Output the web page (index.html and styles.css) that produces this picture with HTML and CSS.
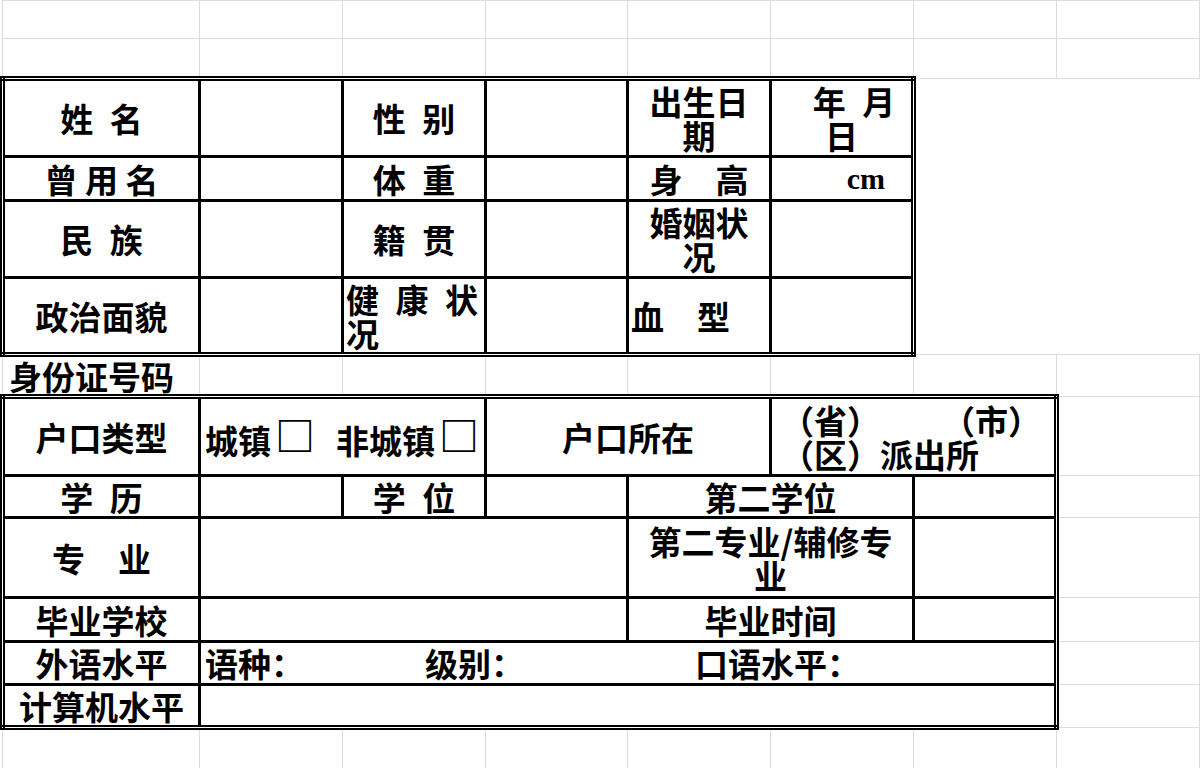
FILE: index.html
```html
<!DOCTYPE html>
<html lang="zh-CN">
<head>
<meta charset="utf-8">
<title>个人信息登记表</title>
<link rel="stylesheet" href="styles.css">
</head>
<body>
<table class="sheet">
  <colgroup>
    <col class="col-a"><col class="col-n"><col class="col-n"><col class="col-d"><col class="col-n"><col class="col-n"><col class="col-n"><col class="col-n">
  </colgroup>
  <tbody>
    <tr class="h38 top-row">
      <td class="g"></td><td class="g"></td><td class="g"></td><td class="g"></td><td class="g"></td><td class="g"></td><td class="g"></td><td class="g"></td>
    </tr>
    <tr class="h40">
      <td class="g"></td><td class="g"></td><td class="g"></td><td class="g"></td><td class="g"></td><td class="g"></td><td class="g"></td><td class="g"></td>
    </tr>

    <tr class="h78">
      <td class="f et el">姓 名</td>
      <td class="f et"></td>
      <td class="f et">性 别</td>
      <td class="f et"></td>
      <td class="f et">出生日<br>期</td>
      <td class="f et er"><span class="ym">年 月</span><br>日</td>
      <td class="x"></td><td class="x"></td>
    </tr>
    <tr class="h44">
      <td class="f el tight">曾 用 名</td>
      <td class="f"></td>
      <td class="f">体 重</td>
      <td class="f"></td>
      <td class="f">身　高</td>
      <td class="f er cm">cm</td>
      <td class="x"></td><td class="x"></td>
    </tr>
    <tr class="h77">
      <td class="f el">民 族</td>
      <td class="f"></td>
      <td class="f">籍 贯</td>
      <td class="f"></td>
      <td class="f">婚姻状<br>况</td>
      <td class="f er"></td>
      <td class="x"></td><td class="x"></td>
    </tr>
    <tr class="h77">
      <td class="f el eb">政治面貌</td>
      <td class="f eb"></td>
      <td class="f eb left">健 康 状<br>况</td>
      <td class="f eb"></td>
      <td class="f eb left">血　型</td>
      <td class="f eb er"></td>
      <td class="x"></td><td class="x"></td>
    </tr>

    <tr class="h42">
      <td class="g id-label">身份证号码</td>
      <td class="g"></td><td class="g"></td><td class="g"></td><td class="g"></td><td class="g"></td><td class="g"></td><td class="g"></td>
    </tr>

    <tr class="h79">
      <td class="f et el">户口类型</td>
      <td class="f et left hukou" colspan="2"><span class="opt">城镇<span class="box">□</span></span><span class="opt">非城镇<span class="box">□</span></span></td>
      <td class="f et" colspan="2">户口所在</td>
      <td class="f et er left addr" colspan="2">（省）<span class="city">（市）</span><br>（区）派出所</td>
      <td class="g"></td>
    </tr>
    <tr class="h42">
      <td class="f el">学 历</td>
      <td class="f"></td>
      <td class="f">学 位</td>
      <td class="f"></td>
      <td class="f" colspan="2">第二学位</td>
      <td class="f er"></td>
      <td class="g"></td>
    </tr>
    <tr class="h80">
      <td class="f el">专　业</td>
      <td class="f" colspan="3"></td>
      <td class="f" colspan="2">第二专业/辅修专<br>业</td>
      <td class="f er"></td>
      <td class="g"></td>
    </tr>
    <tr class="h44">
      <td class="f el">毕业学校</td>
      <td class="f" colspan="3"></td>
      <td class="f" colspan="2">毕业时间</td>
      <td class="f er"></td>
      <td class="g"></td>
    </tr>
    <tr class="h43">
      <td class="f el">外语水平</td>
      <td class="f er left lang" colspan="6"><span class="lang-kind">语种：</span><span class="lang-level">级别：</span><span>口语水平：</span></td>
      <td class="g"></td>
    </tr>
    <tr class="h43">
      <td class="f el eb">计算机水平</td>
      <td class="f er eb" colspan="6"></td>
      <td class="g"></td>
    </tr>

    <tr class="h41">
      <td class="g"></td><td class="g"></td><td class="g"></td><td class="g"></td><td class="g"></td><td class="g"></td><td class="g"></td><td class="g"></td>
    </tr>
  </tbody>
</table>
</body>
</html>
```
FILE: styles.css
```css
html, body {
  margin: 0;
  padding: 0;
  background: #fff;
}

body {
  font-family: "Noto Sans CJK SC", "Noto Sans", sans-serif;
  color: #000;
  overflow: hidden;
}

.sheet {
  border-collapse: collapse;
  table-layout: fixed;
  width: 1200px;
  font-size: 33px;
  font-weight: 700;
  line-height: 34px;
  text-spacing-trim: space-all;
}

.col-a { width: 197px; }
.col-n { width: 143px; }
.col-d { width: 142px; }

.h38 { height: 38px; }
.h40 { height: 40px; }
.h41 { height: 41px; }
.h42 { height: 42px; }
.h43 { height: 43px; }
.h44 { height: 44px; }
.h77 { height: 77px; }
.h78 { height: 78px; }
.h79 { height: 79px; }
.h80 { height: 80px; }

.sheet td {
  padding: 0 1px;
  text-align: center;
  vertical-align: middle;
  white-space: nowrap;
  word-spacing: 9px;
}

/* light spreadsheet gridlines */
.sheet td.g {
  border: 1px solid #dcdcdc;
}

/* blank cells with no gridlines */
.sheet td.x {
  border: none;
}

/* form cells */
.sheet td.f {
  border: 3px solid #000;
}

.sheet td.et { border-top: 5px double #000; }
.sheet td.eb { border-bottom: 5px double #000; }
.sheet td.el { border-left: 5px double #000; }
.sheet td.er { border-right: 5px double #000; }

.sheet td.left {
  text-align: left;
  padding-left: 2px;
}

.sheet td.tight { word-spacing: 0; }

.ym {
  display: inline-block;
  padding-left: 25px;
}

.sheet td.cm {
  font-family: "Liberation Serif", "Times New Roman", serif;
  font-size: 30px;
  text-align: right;
  padding-right: 26px;
}

.sheet td.id-label {
  text-align: left;
  vertical-align: bottom;
  padding-left: 6px;
  padding-bottom: 1px;
}

.sheet td.hukou {
  padding-left: 4px;
  word-spacing: 0;
}

.opt {
  display: inline-block;
}

.opt + .opt {
  margin-left: 21px;
}

.box {
  font-size: 40px;
  margin-left: 4px;
  vertical-align: 3px;
}

.sheet td.addr {
  padding-left: 9px;
}

.city {
  margin-left: 62px;
}

.sheet td.lang {
  padding-left: 4px;
}

.lang-kind {
  display: inline-block;
  width: 220px;
}

.lang-level {
  display: inline-block;
  width: 270px;
}
```
